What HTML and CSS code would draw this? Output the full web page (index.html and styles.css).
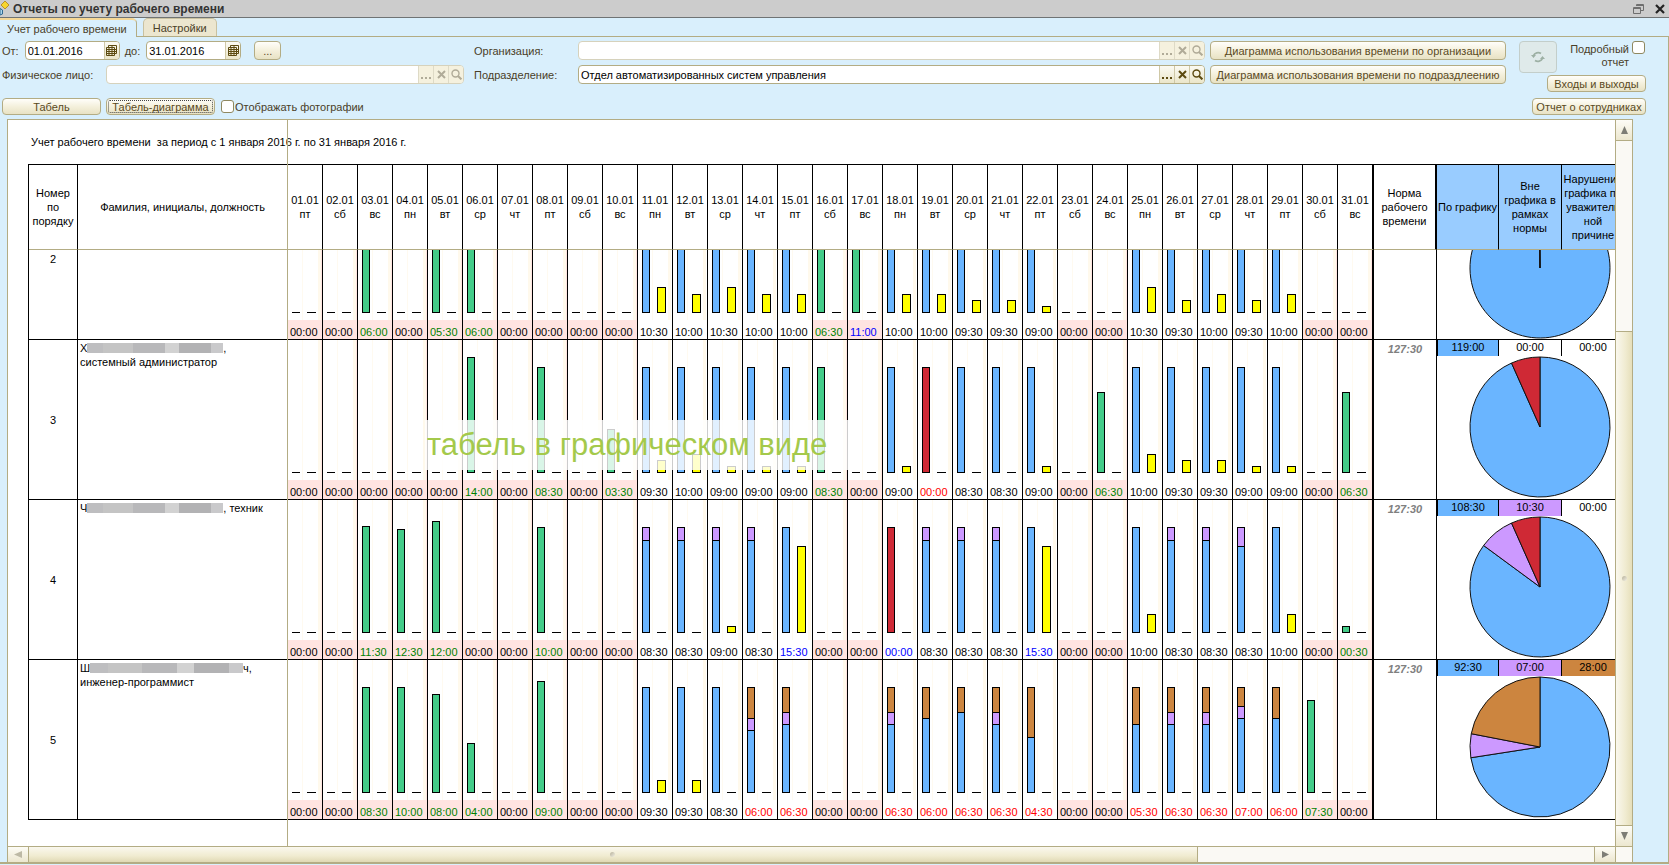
FILE: index.html
```
<!DOCTYPE html>
<html lang="ru">
<head>
<meta charset="utf-8">
<title>Отчеты по учету рабочего времени</title>
<link rel="stylesheet" href="styles.css">
</head>
<body>
<svg class="defs" aria-hidden="true">
  <symbol id="i-clear" viewBox="0 0 9 9"><path d="M1 1l7 7M8 1L1 8" fill="none" stroke="currentColor" stroke-width="2"/></symbol>
  <symbol id="i-search" viewBox="0 0 11 11"><circle cx="4.5" cy="4.5" r="3.5" fill="none" stroke="currentColor" stroke-width="1.4"/><path d="M7 7l3.4 3.4" stroke="currentColor" stroke-width="2"/></symbol>
  <symbol id="i-dots" viewBox="0 0 11 9"><path d="M0 7h2v2H0zM4 7h2v2H4zM8 7h2v2H8z" fill="currentColor"/></symbol>
  <symbol id="i-cal" viewBox="0 0 11 11"><path d="M2.500 .5h8v8h-2M2.500 .5v2M.5 2.500h8v8h-8zM.5 4.500h10M.5 6.500h10M.5 8.500h8M3 2.500v8M6 .5v10" fill="none" stroke="currentColor"/></symbol>
</svg>
<header class="titlebar">
  <svg class="app-icon" viewBox="0 0 10 15" aria-hidden="true"><path d="M5 0l4 4-4 4-4-4z" fill="#f7d62e" stroke="#b8922a"/><path d="M0 7.500l2.500 1.500v4L0 14z" fill="#a9d3ea" stroke="#2f6a92"/></svg>
  <h1>Отчеты по учету рабочего времени</h1>
  <button class="win" type="button" aria-label="Восстановить"><svg width="12" height="12" viewBox="0 0 12 12"><path d="M3.500 3V1.500h7v6H8M.5 4.500h7v6h-7zM.5 5.500h7M3.500 2.500h7" fill="none" stroke="#6e6e6e"/></svg></button>
  <button class="win" type="button" aria-label="Закрыть"><svg width="10" height="10" viewBox="0 0 10 10"><path d="M1 1l8 8M9 1L1 9" stroke="#222" stroke-width="2.200"/></svg></button>
</header>
<nav class="tabs">
  <button class="tab tab-active" type="button">Учет рабочего времени</button>
  <button class="tab" type="button">Настройки</button>
</nav>
<main class="pane">
  <form class="form">
    <div class="col-left">
      <div class="row">
        <label for="from">От:</label>
        <span class="field date"><input id="from" type="text" value="01.01.2016"><button type="button" aria-label="Календарь"><svg width="11" height="11"><use href="#i-cal"/></svg></button></span>
        <label for="to">до:</label>
        <span class="field date"><input id="to" type="text" value="31.01.2016"><button type="button" aria-label="Календарь"><svg width="11" height="11"><use href="#i-cal"/></svg></button></span>
        <button class="btn btn-dots" type="button">...</button>
      </div>
      <div class="row">
        <label class="person-label" for="person">Физическое лицо:</label>
        <span class="field muted grow"><input id="person" type="text"><button type="button" aria-label="Выбрать"><svg width="11" height="9"><use href="#i-dots"/></svg></button><button type="button" aria-label="Очистить"><svg width="9" height="9"><use href="#i-clear"/></svg></button><button type="button" aria-label="Открыть"><svg width="11" height="11"><use href="#i-search"/></svg></button></span>
      </div>
      <div class="row row-actions">
        <button class="btn btn-table" type="button">Табель</button>
        <button class="btn btn-diagram" type="button">Табель-диаграмма</button>
        <label class="check"><input type="checkbox">Отображать фотографии</label>
      </div>
    </div>
    <div class="col-middle">
      <div class="row">
        <label class="org-label" for="org">Организация:</label>
        <span class="field muted grow"><input id="org" type="text"><button type="button" aria-label="Выбрать"><svg width="11" height="9"><use href="#i-dots"/></svg></button><button type="button" aria-label="Очистить"><svg width="9" height="9"><use href="#i-clear"/></svg></button><button type="button" aria-label="Открыть"><svg width="11" height="11"><use href="#i-search"/></svg></button></span>
      </div>
      <div class="row">
        <label class="org-label" for="dept">Подразделение:</label>
        <span class="field grow"><input id="dept" type="text" value="Отдел автоматизированных систем управления"><button type="button" aria-label="Выбрать"><svg width="11" height="9"><use href="#i-dots"/></svg></button><button type="button" aria-label="Очистить"><svg width="9" height="9"><use href="#i-clear"/></svg></button><button type="button" aria-label="Открыть"><svg width="11" height="11"><use href="#i-search"/></svg></button></span>
      </div>
    </div>
    <div class="col-charts">
      <button class="btn" type="button">Диаграмма использования времени по организации</button>
      <button class="btn" type="button">Диаграмма использования времени по подраздлеению</button>
    </div>
    <button class="refresh" type="button" aria-label="Обновить"><svg width="14" height="12" viewBox="0 0 14 12"><path d="M2.500 4.500A5 4.500 0 0 1 10 2.500M11.500 7.500A5 4.500 0 0 1 4 9.500" fill="none" stroke="#9db0a4" stroke-width="1.800"/><path d="M0 4h5L2.500 7zM9 8h5l-2.500-3z" fill="#9db0a4"/></svg></button>
    <div class="col-right">
      <label class="detail"><span>Подробный отчет</span><input type="checkbox"></label>
      <button class="btn btn-inout" type="button">Входы и выходы</button>
      <button class="btn btn-staff" type="button">Отчет о сотрудниках</button>
    </div>
  </form>
  <section class="report">
    <div class="sheet">
      <p class="report-title">Учет рабочего времени&nbsp; за период с 1 января 2016 г. по 31 января 2016 г.</p>
      <table class="grid">
        <colgroup id="cols"></colgroup>
        <thead><tr id="head"></tr></thead>
        <tbody id="body"></tbody>
      </table>
      <div class="split"></div>
      <div class="caption">табель в графическом виде</div>
    </div>
    <div class="vbar">
      <button class="sb up" type="button" aria-label="Вверх"><svg width="7" height="8" viewBox="0 0 7 8"><path d="M3.500 0L7 8H0z" fill="#7d7d75"/></svg></button>
      <div class="vtrack"></div>
      <div class="vthumb"><i class="grip"></i></div>
      <button class="sb down" type="button" aria-label="Вниз"><svg width="7" height="8" viewBox="0 0 7 8"><path d="M3.500 8L7 0H0z" fill="#7d7d75"/></svg></button>
    </div>
    <div class="hbar">
      <button class="sb left" type="button" aria-label="Влево"><svg width="8" height="7" viewBox="0 0 8 7"><path d="M0 3.500L8 0v7z" fill="#bdb9a5"/></svg></button>
      <div class="hthumb"><i class="grip"></i></div>
      <div class="htrack"></div>
      <button class="sb right" type="button" aria-label="Вправо"><svg width="7" height="7" viewBox="0 0 7 7"><path d="M7 3.500L0 0v7z" fill="#7d7d75"/></svg></button>
    </div>
    <div class="corner"></div>
  </section>
</main>
<script src="script.js"></script>
</body>
</html>
```
FILE: styles.css
```
* { box-sizing: border-box; }
body {
  margin: 0;
  height: 100vh;
  padding-bottom: 1px;
  display: flex;
  flex-direction: column;
  overflow: hidden;
  background: #d9effc;
  color: #4a4028;
  font: 11px/14px "Liberation Sans", Arial, sans-serif;
}
button, input { font: inherit; color: inherit; margin: 0; }
button { padding: 0; }
.defs { position: absolute; width: 0; height: 0; }

.titlebar {
  display: flex;
  align-items: center;
  height: 18px;
  padding-right: 4px;
  background: #ccc;
  border-bottom: 1px solid #6f7374;
}
.app-icon { width: 10px; height: 15px; }
.titlebar h1 {
  flex: 1;
  margin: 0 0 0 3px;
  font-size: 12px;
  line-height: 16px;
  color: #333;
}
.win { display: flex; margin-left: 10px; border: 0; background: none; }

.tabs {
  display: flex;
  align-items: flex-end;
  gap: 6px;
  height: 19px;
  border-bottom: 1px solid #b3ac84;
}
.tab {
  height: 18px;
  padding: 0 9px;
  border: 1px solid #c9c1a0;
  border-bottom: 0;
  border-radius: 5px 5px 0 0;
  background: #ece6cf;
}
.tab-active {
  height: 19px;
  margin-bottom: -1px;
  padding: 0 9px 0 7px;
  border-color: #b3ac84;
  border-left: 0;
  border-top: 2px solid #f5d795;
  border-radius: 0 5px 0 0;
  background: #d9effc;
}

.pane {
  flex: 1;
  min-height: 0;
  display: flex;
  flex-direction: column;
  border-right: 1px solid #b3ac84;
  border-bottom: 2px solid #b3ac84;
}
.form { display: flex; height: 82px; padding: 4px 22px 0 2px; }
.row { display: flex; align-items: center; height: 19px; margin-bottom: 5px; }
.col-left { width: 462px; }
.col-middle { flex: 1; margin-left: 10px; }
.col-charts { display: flex; flex-direction: column; gap: 5px; width: 296px; margin-left: 5px; }
.col-charts .btn { width: 100%; }
.col-right { display: flex; flex-direction: column; align-items: flex-end; width: 114px; margin-left: -25px; }

.field {
  display: flex;
  height: 19px;
  overflow: hidden;
  border: 1px solid #b3ac84;
  border-radius: 4px;
  background: #fff;
}
.field input {
  flex: 1;
  min-width: 0;
  padding: 0 2px;
  border: 0;
  background: none;
  color: #000;
}
.field button {
  display: flex;
  align-items: center;
  justify-content: center;
  width: 15px;
  border: 0;
  border-left: 1px solid #cfc8a6;
  background: linear-gradient(#fbfaf2, #ebe6ca);
  color: #5c4a10;
}
.muted { border-color: #d6d2bc; }
.muted button { background: #f5f1de; border-color: #dedac6; color: #b0ab98; }
.grow { flex: 1; }
.date { width: 95px; margin: 0 5px 0 6px; }
.person-label { width: 104px; }
.org-label { width: 104px; }

.btn {
  height: 19px;
  padding: 0 3px;
  border: 1px solid #b3ac84;
  border-radius: 4px;
  background: linear-gradient(#fffefa, #f4f0dc 50%, #e8e2c4);
  color: #5a4a1e;
  white-space: nowrap;
}
.btn-dots { width: 27px; margin-left: 8px; }
.row-actions { margin-top: 14px; height: 17px; }
.row-actions .btn, .btn-inout, .btn-staff { height: 17px; line-height: 14px; }
.btn-table { width: 99px; }
.btn-diagram { width: 109px; margin: 0 6px 0 5px; outline: 1px dotted #444; outline-offset: -3px; }
.btn-inout { width: 99px; }
.btn-staff { width: 114px; margin-top: 6px; }
.check { display: flex; align-items: center; gap: 1px; }
input[type="checkbox"] {
  appearance: none;
  flex: none;
  width: 13px;
  height: 13px;
  border: 1px solid #8f8860;
  border-radius: 3px;
  background: #fff;
}
.detail {
  display: flex;
  gap: 3px;
  width: 76px;
  height: 34px;
  margin-right: 1px;
  text-align: right;
  line-height: 13px;
}
.detail span { flex: 1; padding-top: 2px; }
.refresh {
  display: flex;
  align-items: center;
  justify-content: center;
  width: 38px;
  height: 32px;
  margin-left: 13px;
  border: 1px solid #c3ceca;
  border-radius: 4px;
  background: #dfeaea;
}

.report {
  flex: 1;
  min-height: 0;
  display: grid;
  grid-template: minmax(0, 1fr) 16px / minmax(0, 1fr) 17px;
  margin: 0 35px 0 7px;
  border: 1px solid #b3ac84;
  border-bottom: 0;
}
.sheet { position: relative; overflow: hidden; background: #fff; color: #000; padding-left: 20px; }
.report-title { margin: 0; height: 44px; padding: 15px 0 0 3px; white-space: nowrap; }

.grid {
  table-layout: fixed;
  width: max-content;
  border-collapse: separate;
  border-spacing: 0;
  border-left: 1px solid #000;
}
.c-num { width: 49px; }
.c-name { width: 210px; }
.c-day { width: 35px; }
.c-last { width: 36px; }
.c-norm { width: 63px; }
.c-first { width: 62px; }
.c-sum { width: 63px; }
.grid th {
  height: 86px;
  padding: 0;
  font-weight: normal;
  border: solid #000;
  border-width: 1px 1px 0 0;
  border-bottom: 1px solid #b3ac84;
}
.grid td { height: 160px; padding: 0; border: solid #000; border-width: 0 1px 1px 0; vertical-align: top; }
.grid th.sum { background: #99ccff; }
.grid tr .last-day, .grid tr .norm { border-right-width: 2px; }
.grid tr td.norm { border-right-width: 1px; }
.grid tr.partial td { height: 90px; }
.grid td.num { text-align: center; vertical-align: middle; }
.grid tr.partial td.num { vertical-align: top; padding-top: 2px; }
.grid td.name { padding: 1px 2px; }
.grid td.norm { padding-top: 2px; text-align: center; font-weight: bold; font-style: italic; color: #808080; }

.plot {
  display: flex;
  align-items: flex-end;
  gap: 7px;
  height: 140px;
  padding: 0 0 7px 4px;
  overflow: hidden;
  background: linear-gradient(90deg, transparent 14px, #fffaf0 14px 15px, transparent 15px 30px, #fff9ec 30px 33px, transparent 33px);
}
.partial .plot { height: 70px; }
.bar { display: flex; flex-direction: column-reverse; flex: none; width: 8px; border: 1px solid #000; }
.bar.extra { width: 9px; background: #ffff00; }
.bar.flat { height: 1px; border-width: 1px 0 0; }
.partial .bar { border-top-width: 0; }
.partial .bar.extra, .partial .bar.flat { border-top-width: 1px; }
.seg { border-top: 1px solid #000; }
.green { background: #44cc88; }
.blue { background: #6ab5ff; }
.red { background: #cf2935; }
.violet { background: #cc99ff; }
.brown { background: #cc853f; }
.time { height: 19px; padding: 5px 0 0 2px; }
.off { background: #ffe4e1; }
.off .plot { background-color: #fff; box-shadow: inset -1px 0 #ffe4e1; }
.t-g { color: #008000; }
.t-r { color: #ff0000; }
.t-b { color: #0000ff; }

.totals { display: flex; height: 16px; text-align: center; line-height: 15px; }
.totals span { flex: none; width: 63px; border-right: 1px solid #000; }
.totals span:first-child { width: 62px; border-left: 1px solid #000; }
.grid td.pie { border-right: 0; }
.pie svg { display: block; margin: 0 0 0 32px; }
.pie-clip { display: flex; align-items: flex-end; height: 89px; overflow: hidden; }

.hidden-name { display: flex; align-items: center; height: 14px; }
.mosaic {
  height: 10px;
  background: linear-gradient(90deg, #bebec0 0 12%, #c4c4c4 12% 34%, #b8b8ba 34% 57%, #d2d2d2 57% 68%, #b2b2b4 68% 91%, #c9c9cb 91%);
}
.m-short { width: 136px; }
.m-long { width: 153px; }

.split {
  position: absolute;
  inset: 0 auto 0 279px;
  width: 1px;
  background: #b3ac84;
}
.caption {
  position: absolute;
  left: 417px;
  top: 300px;
  width: 423px;
  height: 50px;
  padding-left: 2px;
  background: rgba(255, 255, 255, .8);
  color: #a4c94b;
  font-size: 31px;
  line-height: 50px;
  white-space: nowrap;
}

.vbar { display: flex; flex-direction: column; border-left: 1px solid #b3ac84; background: #faf9f4; }
.hbar { display: flex; border-top: 1px solid #b3ac84; background: #faf9f4; }
.corner { border: solid #b3ac84; border-width: 1px 0 0 1px; background: #faf9f4; }
.sb { display: flex; align-items: center; justify-content: center; flex: none; border: 0; background: linear-gradient(#fdfcf6, #ece7cf); }
.up { height: 21px; border-bottom: 1px solid #b3ac84; }
.down { height: 21px; border-top: 1px solid #b3ac84; }
.left { width: 21px; border-right: 1px solid #b3ac84; }
.right { width: 21px; border-left: 1px solid #b3ac84; }
.vtrack { flex: 190; }
.vthumb { flex: 494; display: flex; align-items: center; justify-content: center; border-top: 1px solid #b3ac84; background: linear-gradient(90deg, #faf8ee, #f0ebd0 60%, #e6dfba); }
.hthumb { flex: 1170; display: flex; align-items: center; justify-content: center; border-right: 1px solid #b3ac84; background: linear-gradient(#faf8ee, #f0ebd0 60%, #e0d9b4); }
.htrack { flex: 397; }
.grip { width: 5px; height: 5px; border-radius: 3px; background: linear-gradient(135deg, #b5b09a, #f4f1e4); }
```
FILE: script.js
```
const weekdays = ['пт', 'сб', 'вс', 'пн', 'вт', 'ср', 'чт'];
const holidays = new Set([1, 2, 3, 4, 5, 6, 7, 8, 9, 10, 16, 17, 23, 24, 30, 31]);
const colours = { g: 'green', b: 'blue', r: 'red', v: 'violet', o: 'brown' };

// Each day: "time[!colour] segments extra". Segments run from the base upwards.
const rows = [
  { num: 2, partial: true, days: {
    3: '06:00!g g65', 5: '05:30!g g65', 6: '06:00!g g65',
    11: '10:30 b65 26', 12: '10:00 b65 19', 13: '10:30 b65 26', 14: '10:00 b65 19', 15: '10:00 b65 19',
    16: '06:30!g g65', 17: '11:00!b g65',
    18: '10:00 b65 19', 19: '10:00 b65 19', 20: '09:30 b65 13', 21: '09:30 b65 13', 22: '09:00 b65 7',
    25: '10:30 b65 26', 26: '09:30 b65 13', 27: '10:00 b65 19', 28: '09:30 b65 13', 29: '10:00 b65 19' },
    pie: [['b', 127], ['r', .4]] },
  { num: 3, name: ['Х', 'm-short', ','], post: 'системный администратор', norm: '127:30',
    totals: [['119:00', 'b'], ['00:00', ''], ['00:00', '']],
    days: {
    6: '14:00!g g116', 8: '08:30!g g106', 10: '03:30!g g44',
    11: '09:30 b106 13', 12: '10:00 b106 19', 13: '09:00 b106 7', 14: '09:00 b106 7', 15: '09:00 b106 7',
    16: '08:30!g g106', 18: '09:00 b106 7', 19: '00:00!r r106', 20: '08:30 b106', 21: '08:30 b106', 22: '09:00 b106 7',
    24: '06:30!g g81', 25: '10:00 b106 19', 26: '09:30 b106 13', 27: '09:30 b106 13', 28: '09:00 b106 7', 29: '09:00 b106 7',
    31: '06:30!g g81' },
    pie: [['b', 119], ['r', 8.5]] },
  { num: 4, name: ['Ч', 'm-short', ', техник'], post: '', norm: '127:30',
    totals: [['108:30', 'b'], ['10:30', 'v'], ['00:00', '']],
    days: {
    3: '11:30!g g107', 4: '12:30!g g104', 5: '12:00!g g112', 8: '10:00!g g106',
    11: '08:30 b93,v13', 12: '08:30 b93,v13', 13: '09:00 b93,v13 7', 14: '08:30 b93,v13', 15: '15:30!b b106 87',
    18: '00:00!b r106', 19: '08:30 b93,v13', 20: '08:30 b93,v13', 21: '08:30 b93,v13', 22: '15:30!b b106 87',
    25: '10:00 b106 19', 26: '08:30 b93,v13', 27: '08:30 b93,v13', 28: '08:30 b87,v19', 29: '10:00 b106 19',
    31: '00:30!g g7' },
    pie: [['b', 108.5], ['v', 10.5], ['r', 8.5]] },
  { num: 5, name: ['Ш', 'm-long', 'ч,'], post: 'инженер-программист', norm: '127:30',
    totals: [['92:30', 'b'], ['07:00', 'v'], ['28:00', 'o']],
    days: {
    3: '08:30!g g106', 4: '10:00!g g106', 5: '08:00!g g99', 6: '04:00!g g50', 8: '09:00!g g112',
    11: '09:30 b106 13', 12: '09:30 b106 13', 13: '08:30 b106',
    14: '06:00!r b63,v12,o31', 15: '06:30!r b69,v12,o25', 18: '06:30!r b69,v12,o25', 19: '06:00!r b75,o31',
    20: '06:30!r b81,o25', 21: '06:30!r b69,v12,o25', 22: '04:30!r b56,o50',
    25: '05:30!r b69,o37', 26: '06:30!r b69,v12,o25', 27: '06:30!r b69,v12,o25', 28: '07:00!r b75,v12,o19', 29: '06:00!r b75,o31',
    30: '07:30!g g93' },
    pie: [['b', 92.5], ['v', 7], ['o', 28]] }
];

const fills = { b: '#6ab5ff', v: '#cc99ff', r: '#cf2935', o: '#cc853f' };

function pie(parts) {
  const total = parts.reduce((sum, p) => sum + p[1], 0);
  const point = a => `${71 + 70 * Math.sin(a)} ${71 - 70 * Math.cos(a)}`;
  let angle = 0;
  const slices = parts.map(([c, value]) => {
    const end = angle + value / total * 2 * Math.PI;
    const d = `M71 71L${point(angle)}A70 70 0 ${end - angle > Math.PI ? 1 : 0} 1 ${point(end)}Z`;
    angle = end;
    return `<path d="${d}" fill="${fills[c]}" stroke="#111" stroke-linejoin="round"/>`;
  });
  return `<svg width="142" height="142" viewBox="0 0 142 142">${slices.join('')}</svg>`;
}

function dayCell(spec, day) {
  const [timeSpec, segs, extra] = (spec || '00:00').split(' ');
  const [time, tone] = timeSpec.split('!');
  let main = '<i class="bar flat"></i>';
  if (segs) {
    const list = segs.split(',');
    const parts = list.map((s, i) => {
      const last = i === list.length - 1;
      // The outline takes one pixel at the base and one at the top.
      const h = +s.slice(1) - (i === 0 ? 1 : 0) - (last ? 1 : 0);
      return `<i class="${last ? '' : 'seg '}${colours[s[0]]}" style="height:${h}px"></i>`;
    });
    main = `<i class="bar">${parts.join('')}</i>`;
  }
  const second = extra ? `<i class="bar extra" style="height:${extra}px"></i>` : '<i class="bar flat extra"></i>';
  const cls = [holidays.has(day) ? 'off' : '', day === 31 ? 'last-day' : ''].join(' ').trim();
  return `<td class="${cls}"><div class="plot">${main}${second}</div><div class="time ${tone ? 't-' + tone : ''}">${time}</div></td>`;
}

const days = Array.from({ length: 31 }, (_, i) => i + 1);

document.getElementById('cols').innerHTML =
  '<col class="c-num"><col class="c-name">' + days.map(d => `<col class="${d === 31 ? 'c-last' : 'c-day'}">`).join('') +
  '<col class="c-norm"><col class="c-first"><col class="c-sum"><col class="c-sum">';

document.getElementById('head').innerHTML =
  '<th>Номер<br>по<br>порядку</th><th>Фамилия, инициалы, должность</th>' +
  days.map(d => `<th class="${d === 31 ? 'last-day' : ''}">${String(d).padStart(2, '0')}.01<br>${weekdays[(d - 1) % 7]}</th>`).join('') +
  '<th class="norm">Норма<br>рабочего<br>времени</th><th class="sum">По графику</th>' +
  '<th class="sum">Вне<br>графика в<br>рамках<br>нормы</th><th class="sum">Нарушение<br>графика по<br>уважитель<br>ной<br>причине</th>';

document.getElementById('body').innerHTML = rows.map(r => {
  const name = r.name ? `<div class="hidden-name">${r.name[0]}<i class="mosaic ${r.name[1]}"></i>${r.name[2]}</div>${r.post}` : '';
  const totals = r.totals ? `<div class="totals">${r.totals.map(([t, c]) => `<span class="${colours[c] || ''}">${t}</span>`).join('')}</div>` : '';
  const chart = r.partial ? `<div class="pie-clip">${pie(r.pie)}</div>` : pie(r.pie);
  return `<tr class="${r.partial ? 'partial' : ''}"><td class="num">${r.num}</td><td class="name">${name}</td>` +
    days.map(d => dayCell(r.days[d], d)).join('') +
    `<td class="norm">${r.norm || ''}</td><td class="pie" colspan="3">${totals}${chart}</td></tr>`;
}).join('');
```
